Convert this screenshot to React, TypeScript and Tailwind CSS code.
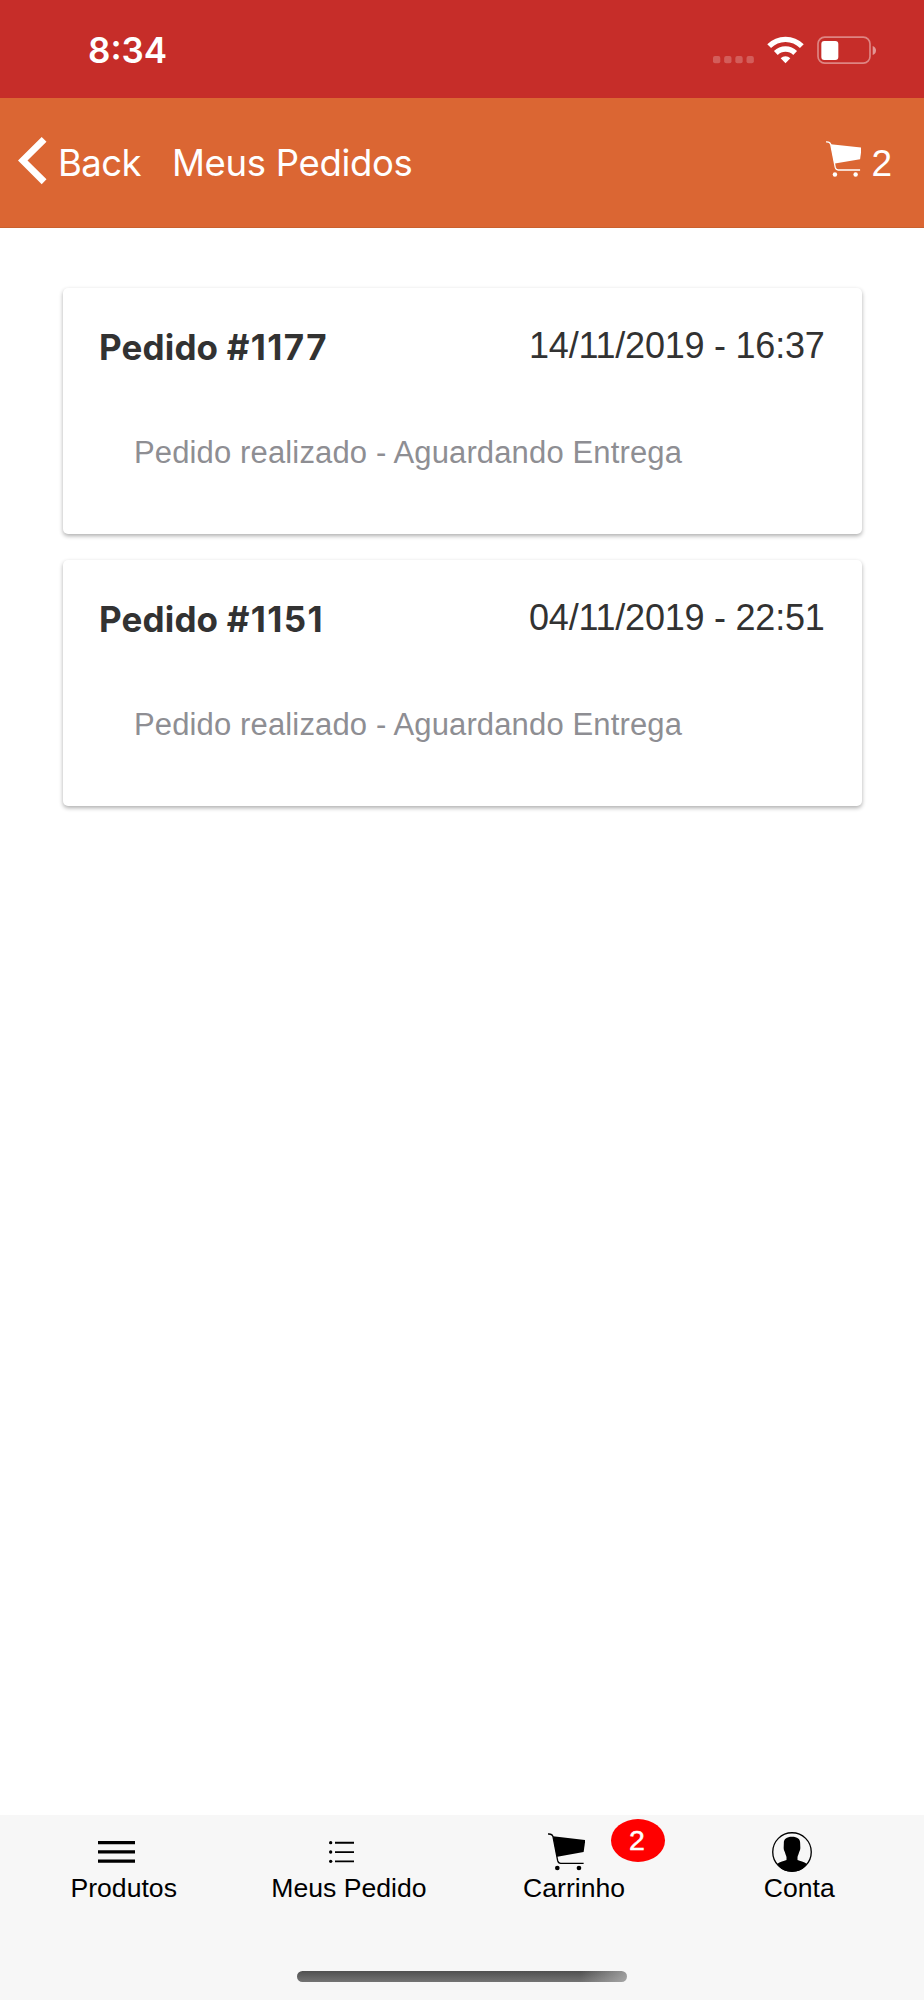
import React from "react";

const inter = "font-[Inter,sans-serif]";
const arial = "font-['Liberation_Sans',Arial,sans-serif]";

function Cart({ className }: { className: string }) {
  return (
    <svg viewBox="54 69 112 113" fill="none" className={className}>
      <path
        d="M54 72 C64 71 67 73 69 80 L83 152 Q85 160 92 160 H161"
        stroke="currentColor"
        strokeWidth="4"
      />
      <path d="M69 79 L166 90 L161 126 L82 140 L80 139 Z" fill="currentColor" />
      <circle cx="82" cy="174" r="7" fill="currentColor" />
      <circle cx="147" cy="174" r="7" fill="currentColor" />
    </svg>
  );
}

function StatusIcons() {
  return (
    <svg viewBox="98 108 490 84" className="mt-9 h-7 w-[163.33px]" fill="none">
      <g fill="#fff" fillOpacity="0.23">
        <rect x="98" y="168" width="22" height="22" rx="6" />
        <rect x="131.5" y="168" width="22" height="22" rx="6" />
        <rect x="165" y="168" width="22" height="22" rx="6" />
        <rect x="198.500" y="168" width="22" height="22" rx="6" />
      </g>
      <g stroke="#fff" strokeWidth="16">
        <path d="M266.5 138.500 A69 69 0 0 1 364.500 138.500" />
        <path d="M286.500 159 A41 41 0 0 1 344.500 159" />
      </g>
      <path d="M301 175 A20 20 0 0 1 330 175 L315.500 190 Z" fill="#fff" />
      <rect x="413" y="111.500" width="156" height="78" rx="20" stroke="#fff" strokeOpacity="0.42" strokeWidth="5" />
      <rect x="423" y="123" width="51" height="57" rx="9" fill="#fff" />
      <path d="M577 138 Q587 142 587 151.500 Q587 161 577 165 Z" fill="#fff" fillOpacity="0.5" />
    </svg>
  );
}

function OrderCard({ id, date }: { id: string; date: string }) {
  return (
    <article className="h-[246px] rounded-[5px] bg-white pt-[38px] pr-[37px] pl-[36.500px] shadow-[0_2px_4.500px_rgba(0,0,0,0.32)]">
      <div className="flex h-[42px] items-start justify-between text-[#323232]">
        <h2 className={`${inter} text-[35px] leading-[42px] font-bold tracking-[0.15px]`}>
          Pedido <span className="tracking-[1.400px]">#{id}</span>
        </h2>
        <time className={`${arial} text-[36px] leading-[39px] tracking-[-0.23px]`}>{date}</time>
      </div>
      <p className={`${arial} mt-[66px] ml-[35px] text-[31px] leading-[38px] tracking-[0.14px] text-[#8e8e93]`}>
        Pedido realizado - Aguardando Entrega
      </p>
    </article>
  );
}

function Tab({ label, icon, badge }: { label: string; icon: React.ReactNode; badge?: number }) {
  return (
    <div className="relative flex w-[225.2px] flex-col items-center">
      <div className="mr-4 flex h-[74px] items-center justify-center">{icon}</div>
      <span className={`${arial} -mt-[16px] mr-px text-[26.600px] leading-[30px] whitespace-nowrap`}>{label}</span>
      {badge !== undefined && (
        <span
          className={`${arial} absolute top-[4px] left-[149px] flex h-[43px] w-[54px] items-center justify-center rounded-[50%] bg-[#ff0000] pr-[2px] text-[28.500px] leading-none text-white [-webkit-text-stroke:0.5px_white]`}
        >
          {badge}
        </span>
      )}
    </div>
  );
}

export default function App() {
  return (
    <div className="flex h-[2000px] w-[924px] flex-col bg-white">
      <div className="flex h-[98px] items-start justify-between bg-[#c62d29] pr-[48px] pl-[88px] text-white">
        <span className={`${inter} pt-[29px] text-[35px] leading-[43px] font-semibold`}>8:34</span>
        <StatusIcons />
      </div>
      <header className="flex h-[130px] items-start border-b border-[#c9612f] bg-[#db6633] text-white">
        <svg viewBox="0 0 30 48" className="mt-[39px] ml-[18px] h-[48px] w-[30px]" fill="currentColor">
          <path d="M0 23.500 L23.700 0 L28.500 4.800 L9.500 23.500 L28.500 42.300 L23.700 47.200 Z" />
        </svg>
        <span className={`${inter} mt-[43px] ml-[10px] text-[36.500px] leading-[44px] tracking-[-0.6px]`}>Back</span>
        <h1 className={`${inter} mt-[43px] ml-[31px] text-[36.500px] leading-[44px] tracking-[-0.32px]`}>
          Meus Pedidos
        </h1>
        <div className="mr-[32px] ml-auto flex items-start">
          <Cart className="mt-[43px] h-[36px] w-[35.700px]" />
          <span className={`${arial} mt-[44px] ml-[10px] text-[37px] leading-[44px]`}>2</span>
        </div>
      </header>
      <main className="flex flex-1 flex-col gap-[26px] px-[62.500px] pt-[60px]">
        <OrderCard id="1177" date="14/11/2019 - 16:37" />
        <OrderCard id="1151" date="04/11/2019 - 22:51" />
      </main>
      <nav className="flex h-[185px] flex-col items-center bg-[#f7f7f7] text-black">
        <div className="flex h-[156px]">
          <Tab
            label="Produtos"
            icon={
              <svg viewBox="0 0 112 66" className="h-[22px] w-[37.300px]" fill="currentColor">
                <path d="M0 0H112V10H0ZM0 27.500H112V37.500H0ZM0 55.500H112V65.500H0Z" />
              </svg>
            }
          />
          <Tab
            label="Meus Pedido"
            icon={
              <svg viewBox="0 0 75 66" className="h-[22px] w-[25px]" fill="currentColor">
                <path d="M18 2.500H75V8H18ZM18 30.500H75V36H18ZM18 58.500H75V64H18Z" />
                <circle cx="5" cy="5" r="5" />
                <circle cx="5" cy="33" r="5" />
                <circle cx="5" cy="61" r="5" />
              </svg>
            }
          />
          <Tab label="Carrinho" icon={<Cart className="h-[37.700px] w-[37.300px]" />} badge={2} />
          <Tab
            label="Conta"
            icon={
              <svg viewBox="66 66 120 120" className="size-10" fill="none">
                <circle cx="126" cy="126" r="57.800" stroke="currentColor" strokeWidth="4" />
                <path
                  d="M126 80.500 C142 80.500 151 87 150.500 100 L151 113 C151 119 149 123 147.500 126 C146 133 143 137 142.500 142 V150 C150 153 162 155 171 162 C161 178 144 185 126 185 C108 185 91 178 81 162 C90 155 102 153 109.500 150 V142 C109 137 106 133 104.500 126 C103 123 101 119 101 113 L101.500 100 C101 87 110 80.500 126 80.500 Z"
                  fill="currentColor"
                />
              </svg>
            }
          />
        </div>
        <div className="h-[11px] w-[330px] rounded-full bg-[linear-gradient(90deg,transparent_86%,rgba(200,200,200,0.6)_100%),linear-gradient(180deg,#505050,#747474)]" />
      </nav>
    </div>
  );
}
